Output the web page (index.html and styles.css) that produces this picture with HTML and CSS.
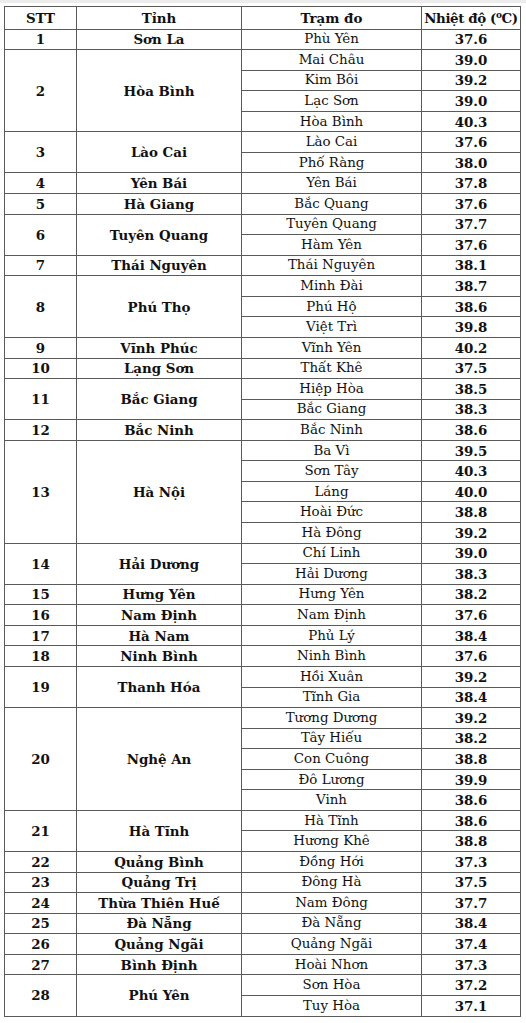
FILE: index.html
```html
<!DOCTYPE html>
<html lang="vi">
<head>
<meta charset="utf-8">
<link rel="stylesheet" href="styles.css">
</head>
<body>
<div class="topband"></div>
<table class="temps">
<colgroup><col class="c1"><col class="c2"><col class="c3"><col class="c4"></colgroup>
<thead>
<tr class="head"><th>STT</th><th>Tỉnh</th><th>Trạm đo</th><th class="tight">Nhiệt độ (<sup>o</sup>C)</th></tr>
</thead>
<tbody>
<tr><td class="b">1</td><td class="b">Sơn La</td><td>Phù Yên</td><td class="b">37.6</td></tr>
<tr><td class="b" rowspan="4">2</td><td class="b" rowspan="4">Hòa Bình</td><td>Mai Châu</td><td class="b">39.0</td></tr>
<tr><td>Kim Bôi</td><td class="b">39.2</td></tr>
<tr><td>Lạc Sơn</td><td class="b">39.0</td></tr>
<tr><td>Hòa Bình</td><td class="b">40.3</td></tr>
<tr><td class="b" rowspan="2">3</td><td class="b" rowspan="2">Lào Cai</td><td>Lào Cai</td><td class="b">37.6</td></tr>
<tr><td>Phố Ràng</td><td class="b">38.0</td></tr>
<tr><td class="b">4</td><td class="b">Yên Bái</td><td>Yên Bái</td><td class="b">37.8</td></tr>
<tr><td class="b">5</td><td class="b">Hà Giang</td><td>Bắc Quang</td><td class="b">37.6</td></tr>
<tr><td class="b" rowspan="2">6</td><td class="b" rowspan="2">Tuyên Quang</td><td>Tuyên Quang</td><td class="b">37.7</td></tr>
<tr><td>Hàm Yên</td><td class="b">37.6</td></tr>
<tr><td class="b">7</td><td class="b">Thái Nguyên</td><td>Thái Nguyên</td><td class="b">38.1</td></tr>
<tr><td class="b" rowspan="3">8</td><td class="b" rowspan="3">Phú Thọ</td><td>Minh Đài</td><td class="b">38.7</td></tr>
<tr><td>Phú Hộ</td><td class="b">38.6</td></tr>
<tr><td>Việt Trì</td><td class="b">39.8</td></tr>
<tr><td class="b">9</td><td class="b">Vĩnh Phúc</td><td>Vĩnh Yên</td><td class="b">40.2</td></tr>
<tr><td class="b">10</td><td class="b">Lạng Sơn</td><td>Thất Khê</td><td class="b">37.5</td></tr>
<tr><td class="b" rowspan="2">11</td><td class="b" rowspan="2">Bắc Giang</td><td>Hiệp Hòa</td><td class="b">38.5</td></tr>
<tr><td>Bắc Giang</td><td class="b">38.3</td></tr>
<tr><td class="b">12</td><td class="b">Bắc Ninh</td><td>Bắc Ninh</td><td class="b">38.6</td></tr>
<tr><td class="b" rowspan="5">13</td><td class="b" rowspan="5">Hà Nội</td><td>Ba Vì</td><td class="b">39.5</td></tr>
<tr><td>Sơn Tây</td><td class="b">40.3</td></tr>
<tr><td>Láng</td><td class="b">40.0</td></tr>
<tr><td>Hoài Đức</td><td class="b">38.8</td></tr>
<tr><td>Hà Đông</td><td class="b">39.2</td></tr>
<tr><td class="b" rowspan="2">14</td><td class="b" rowspan="2">Hải Dương</td><td>Chí Linh</td><td class="b">39.0</td></tr>
<tr><td>Hải Dương</td><td class="b">38.3</td></tr>
<tr><td class="b">15</td><td class="b">Hưng Yên</td><td>Hưng Yên</td><td class="b">38.2</td></tr>
<tr><td class="b">16</td><td class="b">Nam Định</td><td>Nam Định</td><td class="b">37.6</td></tr>
<tr><td class="b">17</td><td class="b">Hà Nam</td><td>Phủ Lý</td><td class="b">38.4</td></tr>
<tr><td class="b">18</td><td class="b">Ninh Bình</td><td>Ninh Bình</td><td class="b">37.6</td></tr>
<tr><td class="b" rowspan="2">19</td><td class="b" rowspan="2">Thanh Hóa</td><td>Hồi Xuân</td><td class="b">39.2</td></tr>
<tr><td>Tĩnh Gia</td><td class="b">38.4</td></tr>
<tr><td class="b" rowspan="5">20</td><td class="b" rowspan="5">Nghệ An</td><td>Tương Dương</td><td class="b">39.2</td></tr>
<tr><td>Tây Hiếu</td><td class="b">38.2</td></tr>
<tr><td>Con Cuông</td><td class="b">38.8</td></tr>
<tr><td>Đô Lương</td><td class="b">39.9</td></tr>
<tr><td>Vinh</td><td class="b">38.6</td></tr>
<tr><td class="b" rowspan="2">21</td><td class="b" rowspan="2">Hà Tĩnh</td><td>Hà Tĩnh</td><td class="b">38.6</td></tr>
<tr><td>Hương Khê</td><td class="b">38.8</td></tr>
<tr><td class="b">22</td><td class="b">Quảng Bình</td><td>Đồng Hới</td><td class="b">37.3</td></tr>
<tr><td class="b">23</td><td class="b">Quảng Trị</td><td>Đông Hà</td><td class="b">37.5</td></tr>
<tr><td class="b">24</td><td class="b">Thừa Thiên Huế</td><td>Nam Đông</td><td class="b">37.7</td></tr>
<tr><td class="b">25</td><td class="b">Đà Nẵng</td><td>Đà Nẵng</td><td class="b">38.4</td></tr>
<tr><td class="b">26</td><td class="b">Quảng Ngãi</td><td>Quảng Ngãi</td><td class="b">37.4</td></tr>
<tr><td class="b">27</td><td class="b">Bình Định</td><td>Hoài Nhơn</td><td class="b">37.3</td></tr>
<tr><td class="b" rowspan="2">28</td><td class="b" rowspan="2">Phú Yên</td><td>Sơn Hòa</td><td class="b">37.2</td></tr>
<tr><td>Tuy Hòa</td><td class="b">37.1</td></tr>
</tbody>
</table>
</body>
</html>
```

FILE: styles.css
```css
html, body {
  margin: 0;
  padding: 0;
  background: #ffffff;
}
body {
  padding: 0 0 0 4px;
  font-family: "DejaVu Serif", "Liberation Serif", serif;
  color: #111111;
}
.topband {
  height: 3px;
  background: #ececec;
  margin: 0 0 3px -4px;
}
.temps {
  border-collapse: collapse;
  table-layout: fixed;
  width: 516px;
  font-size: 13.4px;
}
.c1 { width: 72px; }
.c2 { width: 165px; }
.c3 { width: 180px; }
.c4 { width: 99px; }
.temps th, .temps td {
  border: 1px solid #5a5a5a;
  text-align: center;
  vertical-align: middle;
  padding: 0;
  line-height: 16px;
  white-space: nowrap;
  overflow: hidden;
}
.temps tbody tr { height: 20.57px; }
.temps .head { height: 22.5px; }
.temps th { font-weight: bold; }
.temps .tight { letter-spacing: -0.4px; }
.temps .b { font-weight: bold; }
sup {
  font-size: 9px;
  line-height: 0;
  vertical-align: 5px;
}
```
